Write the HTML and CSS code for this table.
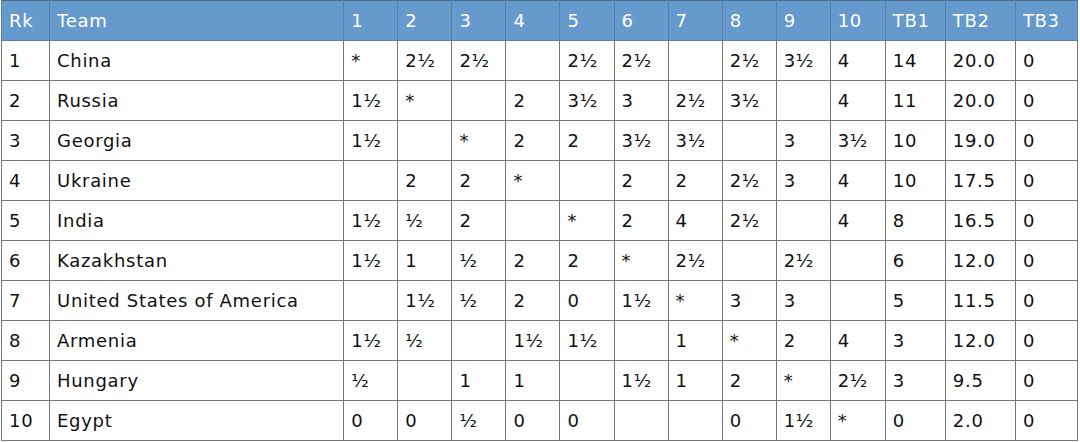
FILE: index.html
```html
<!DOCTYPE html>
<html>
<head>
<meta charset="utf-8">
<link rel="stylesheet" href="styles.css">
</head>
<body>
<table class="standings">
<colgroup>
<col class="c-rk"><col class="c-team">
<col class="c-r"><col class="c-r"><col class="c-r"><col class="c-r"><col class="c-r">
<col class="c-r"><col class="c-r"><col class="c-r"><col class="c-r"><col class="c-r10">
<col class="c-tb1"><col class="c-tb2"><col class="c-tb3">
</colgroup>
<thead>
<tr><th>Rk</th><th>Team</th><th>1</th><th>2</th><th>3</th><th>4</th><th>5</th><th>6</th><th>7</th><th>8</th><th>9</th><th>10</th><th>TB1</th><th>TB2</th><th>TB3</th></tr>
</thead>
<tbody>
<tr><td>1</td><td>China</td><td>*</td><td>2½</td><td>2½</td><td></td><td>2½</td><td>2½</td><td></td><td>2½</td><td>3½</td><td>4</td><td>14</td><td>20.0</td><td>0</td></tr>
<tr><td>2</td><td>Russia</td><td>1½</td><td>*</td><td></td><td>2</td><td>3½</td><td>3</td><td>2½</td><td>3½</td><td></td><td>4</td><td>11</td><td>20.0</td><td>0</td></tr>
<tr><td>3</td><td>Georgia</td><td>1½</td><td></td><td>*</td><td>2</td><td>2</td><td>3½</td><td>3½</td><td></td><td>3</td><td>3½</td><td>10</td><td>19.0</td><td>0</td></tr>
<tr><td>4</td><td>Ukraine</td><td></td><td>2</td><td>2</td><td>*</td><td></td><td>2</td><td>2</td><td>2½</td><td>3</td><td>4</td><td>10</td><td>17.5</td><td>0</td></tr>
<tr><td>5</td><td>India</td><td>1½</td><td>½</td><td>2</td><td></td><td>*</td><td>2</td><td>4</td><td>2½</td><td></td><td>4</td><td>8</td><td>16.5</td><td>0</td></tr>
<tr><td>6</td><td>Kazakhstan</td><td>1½</td><td>1</td><td>½</td><td>2</td><td>2</td><td>*</td><td>2½</td><td></td><td>2½</td><td></td><td>6</td><td>12.0</td><td>0</td></tr>
<tr><td>7</td><td>United States of America</td><td></td><td>1½</td><td>½</td><td>2</td><td>0</td><td>1½</td><td>*</td><td>3</td><td>3</td><td></td><td>5</td><td>11.5</td><td>0</td></tr>
<tr><td>8</td><td>Armenia</td><td>1½</td><td>½</td><td></td><td>1½</td><td>1½</td><td></td><td>1</td><td>*</td><td>2</td><td>4</td><td>3</td><td>12.0</td><td>0</td></tr>
<tr><td>9</td><td>Hungary</td><td>½</td><td></td><td>1</td><td>1</td><td></td><td>1½</td><td>1</td><td>2</td><td>*</td><td>2½</td><td>3</td><td>9.5</td><td>0</td></tr>
<tr><td>10</td><td>Egypt</td><td>0</td><td>0</td><td>½</td><td>0</td><td>0</td><td></td><td></td><td>0</td><td>1½</td><td>*</td><td>0</td><td>2.0</td><td>0</td></tr>
</tbody>
</table>
</body>
</html>
```
FILE: styles.css
```css
html, body {
  margin: 0;
  padding: 0;
  background: #ffffff;
}
body {
  padding-left: 1px;
}
.standings {
  border-collapse: collapse;
  table-layout: fixed;
  width: 1077px;
  font-family: "DejaVu Sans", Verdana, sans-serif;
  font-size: 18px;
  letter-spacing: 0.7px;
  color: #111;
}
.c-rk { width: 48px; }
.c-team { width: 294px; }
.c-r { width: 54px; }
.c-r10 { width: 55px; }
.c-tb1 { width: 60px; }
.c-tb2 { width: 70px; }
.c-tb3 { width: 62px; }
.standings th,
.standings td {
  border: 1px solid #777777;
  height: 39px;
  padding: 0 0 0 7px;
  text-align: left;
  vertical-align: middle;
  white-space: nowrap;
  overflow: hidden;
}
.standings th {
  background: #6699cc;
  color: #ffffff;
  font-weight: normal;
  border-color: #5b7fa6;
  border-top: 1px solid #4a6a8f;
}
```
